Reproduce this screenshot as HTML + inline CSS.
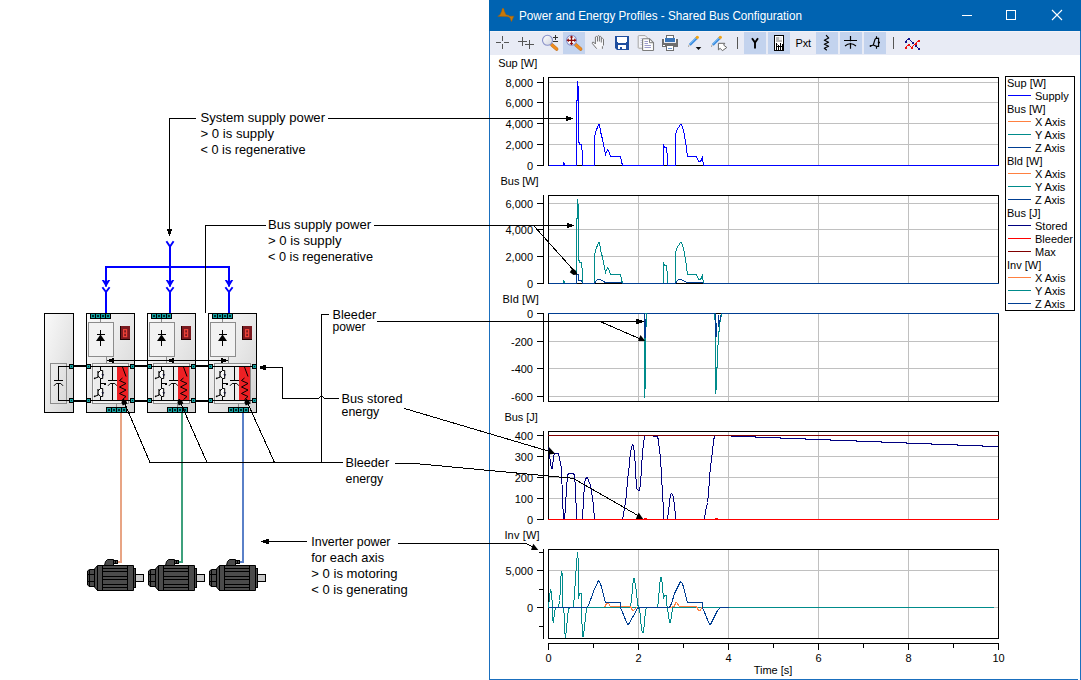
<!DOCTYPE html>
<html><head><meta charset="utf-8"><title>Power and Energy Profiles</title>
<style>
html,body{margin:0;padding:0;background:#fff;}
body{width:1081px;height:680px;overflow:hidden;position:relative;font-family:"Liberation Sans",sans-serif;}
svg{position:absolute;left:0;top:0;display:block;}
svg text{font-family:"Liberation Sans",sans-serif;}
</style></head><body>
<svg width="1081" height="680" viewBox="0 0 1081 680" shape-rendering="crispEdges">
<defs>
<linearGradient id="gmod" x1="0" y1="0" x2="1" y2="1"><stop offset="0" stop-color="#fafafa"/><stop offset="0.5" stop-color="#e8e8e8"/><stop offset="1" stop-color="#d2d2d2"/></linearGradient>
<linearGradient id="glens" x1="0" y1="0" x2="1" y2="1"><stop offset="0" stop-color="#ffffff"/><stop offset="1" stop-color="#d0d4e0"/></linearGradient>
</defs>
<rect x="489" y="0" width="592" height="680" fill="#ffffff" />
<rect x="489" y="0" width="592" height="31" fill="#0063B1" />
<rect x="489" y="31" width="1" height="649" fill="#1a6fbe"/>
<rect x="1080" y="31" width="1" height="649" fill="#1a6fbe"/>
<rect x="489" y="679" width="589" height="1" fill="#1a6fbe"/>
<rect x="490" y="31" width="590" height="24" fill="#e8ebf5" />
<rect x="490" y="31" width="590" height="1" fill="#f3f2f7"/>
<g shape-rendering="geometricPrecision">
<text x="519" y="20" font-size="12.4" text-anchor="start" fill="#fff" textLength="283" lengthAdjust="spacingAndGlyphs">Power and Energy Profiles - Shared Bus Configuration</text>
<path d="M961.5 15.5H971.5" stroke="#fff" stroke-width="1" fill="none" shape-rendering="crispEdges"/>
<rect x="1006.5" y="10.5" width="9" height="9" stroke="#fff" stroke-width="1" fill="none" shape-rendering="crispEdges"/>
<path d="M1052 10L1062 20M1062 10L1052 20" stroke="#fff" stroke-width="1.1" fill="none"/>
<path transform="translate(1,0)" d="M496.8 16.3 L498.5 15.2 L499.5 14 L500 12.5 L500.6 11.5 L501.2 9 L502 8 L502.8 9 L503.4 11.5 L504 12.5 L504.5 14 L505.5 15 L507.5 15.2 L508.5 16.2 L512.8 16.2 L512 18 L511.3 19.8 L510.5 21.6 L509.7 19.8 L509 18 L508 17 L506 16.6 L504 16.4 Z" fill="#c87808" stroke="#a86000" stroke-width="0.5"/>
</g>
<rect x="563" y="32" width="22" height="22" fill="#c3d3ee" />
<rect x="744" y="32" width="22" height="22" fill="#c3d3ee" />
<rect x="768" y="32" width="22" height="22" fill="#c3d3ee" />
<rect x="816" y="32" width="22" height="22" fill="#c3d3ee" />
<rect x="840" y="32" width="22" height="22" fill="#c3d3ee" />
<rect x="864" y="32" width="22" height="22" fill="#c3d3ee" />
<rect x="496" y="42" width="5" height="1" fill="#555555"/>
<rect x="504" y="42" width="5" height="1" fill="#555555"/>
<rect x="502" y="36" width="1" height="5" fill="#555555"/>
<rect x="502" y="44" width="1" height="5" fill="#555555"/>
<rect x="518" y="41" width="9" height="1" fill="#555555"/>
<rect x="522" y="37" width="1" height="9" fill="#555555"/>
<rect x="525" y="44" width="9" height="1" fill="#555555"/>
<rect x="529" y="40" width="1" height="9" fill="#555555"/>
<g shape-rendering="geometricPrecision">
<line x1="552" y1="45" x2="556.6" y2="49" stroke="#b8742c" stroke-width="3.6" stroke-linecap="round"/>
<line x1="552" y1="45" x2="556.6" y2="49" stroke="#f08c20" stroke-width="2.6" stroke-linecap="round"/>
<circle cx="547.5" cy="40.3" r="5" fill="url(#glens)" stroke="#8890c8" stroke-width="1.1"/>
<path d="M553 37.5H558M555.5 35V40M553 41.5H558" stroke="#333" stroke-width="1" fill="none" shape-rendering="crispEdges"/>
<line x1="576" y1="45" x2="580.6" y2="49" stroke="#b8742c" stroke-width="3.6" stroke-linecap="round"/>
<line x1="576" y1="45" x2="580.6" y2="49" stroke="#f08c20" stroke-width="2.6" stroke-linecap="round"/>
<circle cx="571.5" cy="40.3" r="5" fill="#fafcff" stroke="#8890c8" stroke-width="1.1"/>
<path d="M567.5 40.3H575.5M571.5 36.3V44.3" stroke="#8b0c0c" stroke-width="1.3" fill="none"/>
<path d="M566.6 40.3l2.2-2v4zM576.4 40.3l-2.2-2v4zM571.5 35.4l-2 2.2h4zM571.5 45.2l-2-2.2h4z" fill="#8b0c0c"/>
<path d="M592.3 42.3 L594.2 42.3 L595.4 43.8 L595.4 37 Q596.4 35.6 597.5 36.8 L597.6 36 Q598.5 34.6 599.4 36 L599.5 36.6 Q600.4 35.6 601.3 36.8 L601.4 38.5 Q602.6 37.6 603.5 39 L603.5 45.5 L602.4 46.5 L602.4 48.8 L596.8 48.8 L592.3 43.5 Z" fill="#f6f6fa" stroke="none"/>
<path d="M596.7 48.7 L592.4 43.6 L592.4 42.3 L594 42.3 L595.4 44 L595.4 37 Q596.4 35.8 597.5 37 V41.5 M597.5 36.6 Q598.4 34.6 599.4 36.2 V41.5 M599.5 37 Q600.4 35.8 601.3 37 V42.5 M601.4 39 Q602.6 37.6 603.5 39.2 V45.5 M602.4 46.3 V48.8" fill="none" stroke="#6e6e6e" stroke-width="0.95"/>
</g>
<rect x="615" y="36" width="14" height="14" fill="#1f4e9f" />
<rect x="617" y="37" width="10" height="5" fill="#ffffff" />
<rect x="618" y="42" width="8" height="1" fill="#ffffff" />
<rect x="618" y="45" width="8" height="4" fill="#ffffff" />
<rect x="620" y="47" width="2" height="2" fill="#1f4e9f" />
<path d="M615 48v2h2z" fill="#e8ebf5" shape-rendering="geometricPrecision"/>
<g shape-rendering="geometricPrecision">
<path d="M639.2 35.6h6l3 3v9.6h-9.3q-0.7 0-0.7-0.7v-11.2q0-0.7 1-0.7z" fill="#f4f4f8" stroke="#a4a4a4" stroke-width="1"/>
<path d="M640.5 38.5h2M640.5 40.5h2M640.5 42.5h2M640.5 44.5h2" stroke="#c0c4e0" stroke-width="0.9"/>
<path d="M643.2 38.7h6.3l4 4v7.2q0 0.6-0.6 0.6h-9.7q-0.6 0-0.6-0.6v-10.6q0-0.6 0.6-0.6z" fill="#fdfdfd" stroke="#7c7c7c" stroke-width="1.1"/>
<path d="M649.5 38.7v4h4" fill="none" stroke="#7c7c7c" stroke-width="1"/>
<path d="M644.5 41.5h3.5M644.5 43.5h3.5M644.5 45.5h6.5M644.5 47.5h6.5" stroke="#9c9ccc" stroke-width="1" fill="none"/>
</g>
<rect x="662" y="39" width="16" height="8" fill="#6e6e6e" />
<rect x="664" y="38" width="12" height="5" fill="#e8ebf5" />
<rect x="666.5" y="35.5" width="7" height="4" fill="#fff" stroke="#6e6e6e" stroke-width="1"/>
<rect x="664" y="38" width="12" height="4" fill="#ffffff" />
<rect x="665" y="38" width="10" height="3.5" fill="#3874b8" />
<rect x="663" y="45" width="2" height="1" fill="#ffffff"/>
<rect x="666.5" y="45.5" width="7" height="5" fill="#fff" stroke="#6e6e6e" stroke-width="1"/>
<rect x="668" y="48" width="4" height="1" fill="#6a98d0"/>
<g shape-rendering="geometricPrecision">
<g transform="translate(0,0)">
<path d="M688 46.6 L688.9 44 L690.7 45.8 Z" fill="#d8d0c8"/>
<path d="M688 46.6 L688.4 45.5 L689.2 46.2 Z" fill="#444"/>
<path d="M688.9 44 L695.7 37.2 L697.5 39 L690.7 45.8 Z" fill="#3c8ce0"/>
<path d="M689.6 44.2 L696.2 37.7" stroke="#7cc0f4" stroke-width="1"/>
<path d="M695.4 37.5 L697.2 39.3" stroke="#9a9a9a" stroke-width="0.8"/>
<circle cx="697.3" cy="37.3" r="1.6" fill="#f0a418"/>
</g>
<g transform="translate(23,0)">
<path d="M688 46.6 L688.9 44 L690.7 45.8 Z" fill="#d8d0c8"/>
<path d="M688 46.6 L688.4 45.5 L689.2 46.2 Z" fill="#444"/>
<path d="M688.9 44 L695.7 37.2 L697.5 39 L690.7 45.8 Z" fill="#3c8ce0"/>
<path d="M689.6 44.2 L696.2 37.7" stroke="#7cc0f4" stroke-width="1"/>
<path d="M695.4 37.5 L697.2 39.3" stroke="#9a9a9a" stroke-width="0.8"/>
<circle cx="697.3" cy="37.3" r="1.6" fill="#f0a418"/>
</g>
<path d="M695.7 47h5.6l-2.8 3z" fill="#111"/>
<path d="M718.4 43.3h6.4l-1.2 1.8 3.2 2.4-4.4 3.2-2.2-2.4-1.8 1.6z" fill="#fff" stroke="#666" stroke-width="1"/>
</g>
<rect x="737" y="37" width="1" height="12" fill="#555555"/>
<rect x="893" y="37" width="1" height="12" fill="#555555"/>
<g shape-rendering="geometricPrecision">
<path d="M752 38.3 L755 42.6 L758 38.3 M755 42.3V48.5" stroke="#000" stroke-width="1.9" fill="none"/>
</g>
<rect x="774.5" y="35.5" width="9" height="15" fill="#fff" stroke="#000" stroke-width="1"/>
<rect x="776" y="37" width="6" height="5" fill="#b8b8b8" />
<rect x="779" y="37" width="3" height="3" fill="#e8e8e8" />
<rect x="776" y="43" width="1" height="7" fill="#000"/>
<rect x="778" y="45" width="1" height="5" fill="#000"/>
<rect x="780" y="43" width="1" height="7" fill="#000"/>
<rect x="782" y="44" width="1" height="6" fill="#000"/>
<rect x="776" y="46" width="7" height="1" fill="#000"/>
<rect x="777" y="44" width="1" height="1" fill="#888"/>
<rect x="779" y="48" width="1" height="1" fill="#fff"/>
<g shape-rendering="geometricPrecision">
<text x="795.5" y="47" font-size="11" text-anchor="start" fill="#000" textLength="15.5" lengthAdjust="spacing">Pxt</text>
<path d="M826 35.2 L828.7 38 L824.3 40.2 L828.6 42.2 L824.3 44.3 L828.6 46.3 L824.3 48.3 L826.8 50.3" stroke="#000" stroke-width="1.1" fill="none" stroke-linejoin="round"/>
<path d="M850.5 36V48.7M844 40.5H857" stroke="#000" stroke-width="1.2" fill="none"/><path d="M845 46Q850.5 41.5 856 46" stroke="#000" stroke-width="1.1" fill="none"/>
<rect x="849" y="41.3" width="3" height="1.6" fill="#c3d3ee" />
<path d="M870.2 46 L873.3 45 L875 39.4 L876.5 37.8 V36.2 M876.5 38.3 H878.6 V46.3 H876.5 L873.3 45 M876.5 46.3 V48.8" stroke="#000" stroke-width="1.15" fill="none"/>
<path d="M877.8 42.5h2.2" stroke="#000" stroke-width="1.6"/><circle cx="870.5" cy="46" r="0.9" fill="#000"/>
<path d="M905.5 41.5 L908.5 38.5 L912.5 42.5 L915.5 45.5 L918.5 48.5" stroke="#101088" stroke-width="1" fill="none"/>
<path d="M905.5 47.5 L908.5 44.5 L911.5 47.5 L915.5 43.5 L918.5 40.5" stroke="#ee1010" stroke-width="1" fill="none"/>
</g>
<rect x="904.5" y="40.5" width="2" height="2" fill="#101088" />
<rect x="907.5" y="37.5" width="2" height="2" fill="#101088" />
<rect x="911.5" y="41.5" width="2" height="2" fill="#101088" />
<rect x="914.5" y="44.5" width="2" height="2" fill="#101088" />
<rect x="917.5" y="47.5" width="2" height="2" fill="#101088" />
<rect x="904.5" y="46.5" width="2" height="2" fill="#ee1010" />
<rect x="907.5" y="43.5" width="2" height="2" fill="#ee1010" />
<rect x="910.5" y="46.5" width="2" height="2" fill="#ee1010" />
<rect x="914.5" y="42.5" width="2" height="2" fill="#ee1010" />
<rect x="917.5" y="39.5" width="2" height="2" fill="#ee1010" />
<g id="charts">
<rect x="548" y="77" width="451" height="89" fill="#ffffff" />
<rect x="549" y="82" width="449" height="1" fill="#c0c0c0"/>
<rect x="549" y="102" width="449" height="1" fill="#c0c0c0"/>
<rect x="549" y="123" width="449" height="1" fill="#c0c0c0"/>
<rect x="549" y="144" width="449" height="1" fill="#c0c0c0"/>
<rect x="638" y="78" width="1" height="87" fill="#c0c0c0"/>
<rect x="728" y="78" width="1" height="87" fill="#c0c0c0"/>
<rect x="818" y="78" width="1" height="87" fill="#c0c0c0"/>
<rect x="908" y="78" width="1" height="87" fill="#c0c0c0"/>
<rect x="548" y="77" width="451" height="1" fill="#000"/>
<rect x="548" y="165" width="451" height="1" fill="#000"/>
<rect x="548" y="77" width="1" height="89" fill="#000"/>
<rect x="998" y="77" width="1" height="89" fill="#000"/>
<rect x="543" y="77" width="1" height="89" fill="#000"/>
<rect x="537" y="82" width="7" height="1" fill="#000"/>
<rect x="537" y="102" width="7" height="1" fill="#000"/>
<rect x="537" y="123" width="7" height="1" fill="#000"/>
<rect x="537" y="144" width="7" height="1" fill="#000"/>
<rect x="537" y="165" width="7" height="1" fill="#000"/>
<g shape-rendering="geometricPrecision">
<text x="533" y="86.5" font-size="11" text-anchor="end" fill="#000" >8,000</text>
<text x="533" y="106.5" font-size="11" text-anchor="end" fill="#000" >6,000</text>
<text x="533" y="127.5" font-size="11" text-anchor="end" fill="#000" >4,000</text>
<text x="533" y="148.5" font-size="11" text-anchor="end" fill="#000" >2,000</text>
<text x="533" y="169.5" font-size="11" text-anchor="end" fill="#000" >0</text>
<text x="498.2" y="67" font-size="11" text-anchor="start" fill="#000" textLength="39.0" lengthAdjust="spacing">Sup [W]</text>
</g>
<rect x="548" y="195" width="451" height="89" fill="#ffffff" />
<rect x="549" y="203" width="449" height="1" fill="#c0c0c0"/>
<rect x="549" y="229" width="449" height="1" fill="#c0c0c0"/>
<rect x="549" y="256" width="449" height="1" fill="#c0c0c0"/>
<rect x="638" y="196" width="1" height="87" fill="#c0c0c0"/>
<rect x="728" y="196" width="1" height="87" fill="#c0c0c0"/>
<rect x="818" y="196" width="1" height="87" fill="#c0c0c0"/>
<rect x="908" y="196" width="1" height="87" fill="#c0c0c0"/>
<rect x="548" y="195" width="451" height="1" fill="#000"/>
<rect x="548" y="283" width="451" height="1" fill="#000"/>
<rect x="548" y="195" width="1" height="89" fill="#000"/>
<rect x="998" y="195" width="1" height="89" fill="#000"/>
<rect x="543" y="195" width="1" height="89" fill="#000"/>
<rect x="537" y="203" width="7" height="1" fill="#000"/>
<rect x="537" y="229" width="7" height="1" fill="#000"/>
<rect x="537" y="256" width="7" height="1" fill="#000"/>
<rect x="537" y="283" width="7" height="1" fill="#000"/>
<g shape-rendering="geometricPrecision">
<text x="533" y="207.5" font-size="11" text-anchor="end" fill="#000" >6,000</text>
<text x="533" y="233.5" font-size="11" text-anchor="end" fill="#000" >4,000</text>
<text x="533" y="260.5" font-size="11" text-anchor="end" fill="#000" >2,000</text>
<text x="533" y="287.5" font-size="11" text-anchor="end" fill="#000" >0</text>
<text x="500.6" y="185" font-size="11" text-anchor="start" fill="#000" textLength="38.0" lengthAdjust="spacing">Bus [W]</text>
</g>
<rect x="548" y="313" width="451" height="89" fill="#ffffff" />
<rect x="549" y="341" width="449" height="1" fill="#c0c0c0"/>
<rect x="549" y="368" width="449" height="1" fill="#c0c0c0"/>
<rect x="549" y="396" width="449" height="1" fill="#c0c0c0"/>
<rect x="638" y="314" width="1" height="87" fill="#c0c0c0"/>
<rect x="728" y="314" width="1" height="87" fill="#c0c0c0"/>
<rect x="818" y="314" width="1" height="87" fill="#c0c0c0"/>
<rect x="908" y="314" width="1" height="87" fill="#c0c0c0"/>
<rect x="548" y="313" width="451" height="1" fill="#000"/>
<rect x="548" y="401" width="451" height="1" fill="#000"/>
<rect x="548" y="313" width="1" height="89" fill="#000"/>
<rect x="998" y="313" width="1" height="89" fill="#000"/>
<rect x="543" y="313" width="1" height="89" fill="#000"/>
<rect x="537" y="313" width="7" height="1" fill="#000"/>
<rect x="537" y="341" width="7" height="1" fill="#000"/>
<rect x="537" y="368" width="7" height="1" fill="#000"/>
<rect x="537" y="396" width="7" height="1" fill="#000"/>
<g shape-rendering="geometricPrecision">
<text x="533" y="317.5" font-size="11" text-anchor="end" fill="#000" >0</text>
<text x="533" y="345.5" font-size="11" text-anchor="end" fill="#000" >-200</text>
<text x="533" y="372.5" font-size="11" text-anchor="end" fill="#000" >-400</text>
<text x="533" y="400.5" font-size="11" text-anchor="end" fill="#000" >-600</text>
<text x="502.6" y="303" font-size="11" text-anchor="start" fill="#000" textLength="36.2" lengthAdjust="spacing">Bld [W]</text>
</g>
<rect x="548" y="431" width="451" height="89" fill="#ffffff" />
<rect x="549" y="456" width="449" height="1" fill="#c0c0c0"/>
<rect x="549" y="477" width="449" height="1" fill="#c0c0c0"/>
<rect x="549" y="498" width="449" height="1" fill="#c0c0c0"/>
<rect x="638" y="432" width="1" height="87" fill="#c0c0c0"/>
<rect x="728" y="432" width="1" height="87" fill="#c0c0c0"/>
<rect x="818" y="432" width="1" height="87" fill="#c0c0c0"/>
<rect x="908" y="432" width="1" height="87" fill="#c0c0c0"/>
<rect x="548" y="431" width="451" height="1" fill="#000"/>
<rect x="548" y="519" width="451" height="1" fill="#000"/>
<rect x="548" y="431" width="1" height="89" fill="#000"/>
<rect x="998" y="431" width="1" height="89" fill="#000"/>
<rect x="543" y="431" width="1" height="89" fill="#000"/>
<rect x="537" y="435" width="7" height="1" fill="#000"/>
<rect x="537" y="456" width="7" height="1" fill="#000"/>
<rect x="537" y="477" width="7" height="1" fill="#000"/>
<rect x="537" y="498" width="7" height="1" fill="#000"/>
<rect x="537" y="519" width="7" height="1" fill="#000"/>
<g shape-rendering="geometricPrecision">
<text x="533" y="439.5" font-size="11" text-anchor="end" fill="#000" >400</text>
<text x="533" y="460.5" font-size="11" text-anchor="end" fill="#000" >300</text>
<text x="533" y="481.5" font-size="11" text-anchor="end" fill="#000" >200</text>
<text x="533" y="502.5" font-size="11" text-anchor="end" fill="#000" >100</text>
<text x="533" y="523.5" font-size="11" text-anchor="end" fill="#000" >0</text>
<text x="504.4" y="421" font-size="11" text-anchor="start" fill="#000" textLength="33.4" lengthAdjust="spacing">Bus [J]</text>
</g>
<rect x="548" y="549" width="451" height="90" fill="#ffffff" />
<rect x="549" y="570" width="449" height="1" fill="#c0c0c0"/>
<rect x="549" y="607" width="449" height="1" fill="#c0c0c0"/>
<rect x="638" y="550" width="1" height="88" fill="#c0c0c0"/>
<rect x="728" y="550" width="1" height="88" fill="#c0c0c0"/>
<rect x="818" y="550" width="1" height="88" fill="#c0c0c0"/>
<rect x="908" y="550" width="1" height="88" fill="#c0c0c0"/>
<rect x="548" y="549" width="451" height="1" fill="#000"/>
<rect x="548" y="638" width="451" height="1" fill="#000"/>
<rect x="548" y="549" width="1" height="90" fill="#000"/>
<rect x="998" y="549" width="1" height="90" fill="#000"/>
<rect x="543" y="549" width="1" height="90" fill="#000"/>
<rect x="539" y="552" width="5" height="1" fill="#000"/>
<rect x="537" y="570" width="7" height="1" fill="#000"/>
<rect x="539" y="589" width="5" height="1" fill="#000"/>
<rect x="537" y="607" width="7" height="1" fill="#000"/>
<rect x="539" y="626" width="5" height="1" fill="#000"/>
<g shape-rendering="geometricPrecision">
<text x="533" y="574.5" font-size="11" text-anchor="end" fill="#000" >5,000</text>
<text x="533" y="611.5" font-size="11" text-anchor="end" fill="#000" >0</text>
<text x="504.4" y="539" font-size="11" text-anchor="start" fill="#000" textLength="35.2" lengthAdjust="spacing">Inv [W]</text>
</g>
<rect x="548" y="643" width="451" height="1" fill="#000"/>
<rect x="548" y="643" width="1" height="7" fill="#000"/>
<rect x="593" y="643" width="1" height="5" fill="#000"/>
<rect x="638" y="643" width="1" height="7" fill="#000"/>
<rect x="683" y="643" width="1" height="5" fill="#000"/>
<rect x="728" y="643" width="1" height="7" fill="#000"/>
<rect x="773" y="643" width="1" height="5" fill="#000"/>
<rect x="818" y="643" width="1" height="7" fill="#000"/>
<rect x="863" y="643" width="1" height="5" fill="#000"/>
<rect x="908" y="643" width="1" height="7" fill="#000"/>
<rect x="953" y="643" width="1" height="5" fill="#000"/>
<rect x="998" y="643" width="1" height="7" fill="#000"/>
<g shape-rendering="geometricPrecision">
<text x="548.5" y="662" font-size="11" text-anchor="middle" fill="#000" >0</text>
<text x="638.5" y="662" font-size="11" text-anchor="middle" fill="#000" >2</text>
<text x="728.5" y="662" font-size="11" text-anchor="middle" fill="#000" >4</text>
<text x="818.5" y="662" font-size="11" text-anchor="middle" fill="#000" >6</text>
<text x="908.5" y="662" font-size="11" text-anchor="middle" fill="#000" >8</text>
<text x="998.5" y="662" font-size="11" text-anchor="middle" fill="#000" >10</text>
<text x="773" y="674" font-size="11" text-anchor="middle" fill="#000" >Time [s]</text>
</g>
<polyline points="548.5,165.5 563.5,165.5 563.5,162.5 564.5,164.5 564.5,165.5 576.5,165.5 576.5,100.5 577.5,100.5 577.5,81.5 578.5,90.5 578.5,140.5 579.5,144.5 581.5,144.5 582.5,155.5 582.5,165.5 594.5,165.5 594.5,137.5 595.5,132.5 598.5,124.5 599.5,124.5 600.5,131.5 602.5,139.5 604.5,149.5 605.5,154.5 607.5,149.5 608.5,150.5 610.5,156.5 620.5,156.5 621.5,161.5 622.5,165.5 663.5,165.5 663.5,144.5 664.5,147.5 666.5,147.5 667.5,158.5 667.5,165.5 675.5,165.5 675.5,135.5 676.5,130.5 680.5,124.5 681.5,124.5 683.5,130.5 685.5,141.5 687.5,156.5 696.5,156.5 698.5,161.5 700.5,161.5 702.5,157.5 703.5,165.5 998.5,165.5" fill="none" stroke="#0000ff" stroke-width="1" />
<polyline points="548.5,283.5 563.5,283.5 563.5,280.5 564.5,282.5 564.5,283.5 576.5,283.5 576.5,218.5 577.5,218.5 577.5,199.5 578.5,208.5 578.5,258.5 579.5,262.5 581.5,262.5 582.5,273.5 582.5,283.5 594.5,283.5 594.5,255.5 595.5,250.5 598.5,242.5 599.5,242.5 600.5,249.5 602.5,257.5 604.5,267.5 605.5,272.5 607.5,267.5 608.5,268.5 610.5,274.5 620.5,274.5 621.5,279.5 622.5,283.5 663.5,283.5 663.5,262.5 664.5,265.5 666.5,265.5 667.5,276.5 667.5,283.5 675.5,283.5 675.5,253.5 676.5,248.5 680.5,242.5 681.5,242.5 683.5,248.5 685.5,259.5 687.5,274.5 696.5,274.5 698.5,279.5 700.5,279.5 702.5,275.5 703.5,283.5 998.5,283.5" fill="none" stroke="#008b8b" stroke-width="1" />
<polyline points="548.5,283.5 576.5,283.5 576.5,274.5 578.5,274.5 578.5,280.5 581.5,280.5 582.5,283.5 594.5,283.5 595.5,281.5 597.5,279.5 600.5,279.5 603.5,281.5 605.5,282.5 621.5,282.5 622.5,283.5 675.5,283.5 676.5,281.5 678.5,279.5 681.5,279.5 684.5,281.5 687.5,282.5 702.5,282.5 703.5,283.5 998.5,283.5" fill="none" stroke="#003e92" stroke-width="1" />
<rect x="548" y="313" width="451" height="1" fill="#003e92"/>
<rect x="644" y="313" width="1" height="85" fill="#008b8b"/>
<rect x="645" y="313" width="1" height="76" fill="#008b8b"/>
<rect x="646" y="313" width="1" height="14" fill="#008b8b"/>
<rect x="644" y="313" width="1" height="25" fill="#003e92"/>
<rect x="645" y="319" width="1" height="19" fill="#003e92"/>
<rect x="645" y="314" width="1" height="5" fill="#ffffff"/>
<polyline points="714.5,313.5 714.5,318.5 715.5,320.5 715.5,393.5 716.5,386.5 716.5,367.5 717.5,367.5 717.5,345.5 718.5,344.5 718.5,331.5 719.5,331.5 719.5,321.5 720.5,321.5 720.5,316.5 721.5,316.5 721.5,313.5" fill="none" stroke="#008b8b" stroke-width="1" />
<polyline points="715.5,313.5 715.5,336.5 716.5,336.5 716.5,322.5" fill="none" stroke="#003e92" stroke-width="1" />
<polyline points="718.5,314.5 718.5,326.5 719.5,321.5 720.5,318.5 720.5,314.5" fill="none" stroke="#003e92" stroke-width="1" />
<rect x="716" y="313" width="5" height="1" fill="#000"/>
<rect x="548" y="435" width="451" height="1" fill="#800000"/>
<polyline points="548.5,447.5 549.5,454.5 550.5,463.5 551.5,468.5 552.5,468.5 553.5,456.5 554.5,453.5 558.5,453.5 559.5,458.5 561.5,468.5 562.5,499.5 563.5,518.5 564.5,519.5 565.5,506.5 566.5,488.5 567.5,475.5 568.5,473.5 573.5,473.5 574.5,475.5 575.5,487.5 576.5,518.5 576.5,519.5 582.5,519.5 583.5,499.5 584.5,484.5 585.5,478.5 587.5,477.5 588.5,480.5 590.5,485.5 592.5,497.5 593.5,506.5 594.5,518.5 595.5,519.5 622.5,519.5 624.5,508.5 626.5,494.5 627.5,480.5 629.5,463.5 630.5,451.5 632.5,444.5 633.5,445.5 634.5,453.5 635.5,468.5 636.5,488.5 638.5,490.5 639.5,490.5 640.5,483.5 641.5,468.5 642.5,451.5 644.5,436.5" fill="none" stroke="#000080" stroke-width="1" />
<polyline points="652.5,436.5 657.5,436.5 658.5,440.5 659.5,450.5 660.5,457.5 661.5,475.5 662.5,494.5 663.5,508.5 663.5,519.5 667.5,519.5 668.5,511.5 669.5,502.5 670.5,494.5 671.5,493.5 672.5,494.5 673.5,497.5 674.5,505.5 675.5,516.5 675.5,519.5 703.5,519.5 704.5,518.5 705.5,511.5 707.5,502.5 708.5,494.5 709.5,477.5 710.5,466.5 712.5,451.5 713.5,440.5 714.5,436.5" fill="none" stroke="#000080" stroke-width="1" />
<polyline points="730.5,436.5 755.5,436.5 755.5,437.5 780.5,437.5 780.5,438.5 805.5,438.5 805.5,439.5 830.5,439.5 830.5,440.5 856.5,440.5 856.5,441.5 881.5,441.5 881.5,442.5 906.5,442.5 906.5,443.5 931.5,443.5 931.5,444.5 957.5,444.5 957.5,445.5 982.5,445.5 982.5,446.5 997.5,446.5" fill="none" stroke="#000080" stroke-width="1" />
<rect x="548" y="519" width="451" height="1" fill="#ff0000"/>
<rect x="644" y="518" width="3" height="1" fill="#ff0000"/>
<rect x="715" y="518" width="3" height="1" fill="#ff0000"/>
<rect x="548" y="607" width="446" height="1" fill="#008b8b"/>
<polyline points="548.5,607.5 549.5,596.5 550.5,589.5 551.5,592.5 552.5,606.5 552.5,619.5 553.5,621.5 554.5,612.5 555.5,607.5 558.5,607.5 559.5,600.5 560.5,590.5 560.5,581.5 561.5,571.5 562.5,574.5 562.5,603.5 563.5,612.5 564.5,613.5 564.5,629.5 565.5,637.5 566.5,629.5 567.5,617.5 568.5,609.5 569.5,607.5 573.5,607.5 574.5,593.5 575.5,578.5 576.5,564.5 577.5,552.5 578.5,562.5 578.5,598.5 579.5,593.5 581.5,593.5 581.5,610.5 582.5,636.5 583.5,636.5 584.5,626.5 585.5,617.5 586.5,609.5 586.5,607.5" fill="none" stroke="#008b8b" stroke-width="1" />
<polyline points="630.5,607.5 631.5,599.5 632.5,588.5 633.5,578.5 634.5,578.5 635.5,586.5 636.5,591.5 637.5,603.5 638.5,607.5 639.5,607.5 640.5,617.5 641.5,629.5 642.5,632.5 643.5,632.5 644.5,621.5 645.5,610.5 646.5,607.5" fill="none" stroke="#008b8b" stroke-width="1" />
<polyline points="657.5,607.5 658.5,600.5 659.5,586.5 660.5,577.5 661.5,577.5 662.5,586.5 663.5,598.5 664.5,595.5 666.5,595.5 666.5,603.5 667.5,607.5 668.5,615.5 669.5,622.5 670.5,622.5 671.5,615.5 672.5,608.5 673.5,607.5" fill="none" stroke="#008b8b" stroke-width="1" />
<polyline points="604.5,607.5 606.5,603.5 608.5,603.5 610.5,606.5 630.5,606.5 632.5,610.5 633.5,610.5 636.5,607.5" fill="none" stroke="#ff8040" stroke-width="1" />
<polyline points="669.5,607.5 674.5,606.5 675.5,602.5 676.5,602.5 679.5,606.5 696.5,606.5 698.5,610.5 700.5,610.5 701.5,607.5" fill="none" stroke="#ff8040" stroke-width="1" />
<polyline points="548.5,607.5 586.5,607.5 588.5,605.5 593.5,591.5 598.5,580.5 600.5,583.5 605.5,602.5 620.5,602.5 620.5,607.5 627.5,624.5 628.5,624.5 637.5,608.5 639.5,607.5 669.5,607.5 671.5,603.5 674.5,593.5 680.5,581.5 682.5,583.5 687.5,602.5 702.5,602.5 702.5,607.5 709.5,624.5 710.5,624.5 717.5,610.5 720.5,607.5 728.5,607.5" fill="none" stroke="#003e92" stroke-width="1" />
</g>
<rect x="1005.5" y="76.5" width="69" height="234" fill="#ffffff" stroke="#000" stroke-width="1" />
<clipPath id="legclip"><rect x="1006" y="77" width="68" height="233"/></clipPath>
<g shape-rendering="geometricPrecision" clip-path="url(#legclip)">
<text x="1007" y="87" font-size="11" text-anchor="start" fill="#000" >Sup [W]</text>
<text x="1035" y="100" font-size="11" text-anchor="start" fill="#000" >Supply</text>
<text x="1007" y="113" font-size="11" text-anchor="start" fill="#000" >Bus [W]</text>
<text x="1035" y="126" font-size="11" text-anchor="start" fill="#000" >X Axis</text>
<text x="1035" y="139" font-size="11" text-anchor="start" fill="#000" >Y Axis</text>
<text x="1035" y="152" font-size="11" text-anchor="start" fill="#000" >Z Axis</text>
<text x="1007" y="165" font-size="11" text-anchor="start" fill="#000" >Bld [W]</text>
<text x="1035" y="178" font-size="11" text-anchor="start" fill="#000" >X Axis</text>
<text x="1035" y="191" font-size="11" text-anchor="start" fill="#000" >Y Axis</text>
<text x="1035" y="204" font-size="11" text-anchor="start" fill="#000" >Z Axis</text>
<text x="1007" y="217" font-size="11" text-anchor="start" fill="#000" >Bus [J]</text>
<text x="1035" y="230" font-size="11" text-anchor="start" fill="#000" >Stored</text>
<text x="1035" y="243" font-size="11" text-anchor="start" fill="#000" >Bleeder</text>
<text x="1035" y="256" font-size="11" text-anchor="start" fill="#000" >Max</text>
<text x="1007" y="269" font-size="11" text-anchor="start" fill="#000" >Inv [W]</text>
<text x="1035" y="282" font-size="11" text-anchor="start" fill="#000" >X Axis</text>
<text x="1035" y="295" font-size="11" text-anchor="start" fill="#000" >Y Axis</text>
<text x="1035" y="308" font-size="11" text-anchor="start" fill="#000" >Z Axis</text>
</g>
<rect x="1008" y="95" width="23" height="1" fill="#0000ff"/>
<rect x="1008" y="121" width="23" height="1" fill="#ff8040"/>
<rect x="1008" y="134" width="23" height="1" fill="#008b8b"/>
<rect x="1008" y="147" width="23" height="1" fill="#003e92"/>
<rect x="1008" y="173" width="23" height="1" fill="#ff8040"/>
<rect x="1008" y="186" width="23" height="1" fill="#008b8b"/>
<rect x="1008" y="199" width="23" height="1" fill="#003e92"/>
<rect x="1008" y="225" width="23" height="1" fill="#000080"/>
<rect x="1008" y="238" width="23" height="1" fill="#ff0000"/>
<rect x="1008" y="251" width="23" height="1" fill="#800000"/>
<rect x="1008" y="277" width="23" height="1" fill="#ff8040"/>
<rect x="1008" y="290" width="23" height="1" fill="#008b8b"/>
<rect x="1008" y="303" width="23" height="1" fill="#003e92"/>
<rect x="120" y="412" width="2" height="151" fill="#e8a484" />
<rect x="118" y="561" width="4" height="2" fill="#e8a484" />
<rect x="181" y="412" width="2" height="151" fill="#3ea07c" />
<rect x="179" y="561" width="4" height="2" fill="#3ea07c" />
<rect x="242" y="412" width="2" height="151" fill="#5a80c8" />
<rect x="240" y="561" width="4" height="2" fill="#5a80c8" />
<rect x="44.5" y="313.5" width="29" height="99" fill="url(#gmod)" stroke="#000" stroke-width="1" />
<rect x="50.5" y="363.5" width="16" height="40" fill="none" stroke="#8c8c8c" stroke-width="1" />
<rect x="58" y="366" width="14" height="1" fill="#000"/>
<rect x="58" y="400" width="14" height="1" fill="#000"/>
<rect x="58" y="366" width="1" height="15" fill="#000"/>
<rect x="54" y="380" width="9" height="1" fill="#000"/>
<path d="M54 385.8 L56.2 383.5 H60.8 L63 385.8" stroke="#000" stroke-width="1" fill="none" shape-rendering="geometricPrecision"/>
<rect x="58" y="383" width="1" height="18" fill="#000"/>
<rect x="69" y="364" width="5" height="5" fill="#000000" />
<rect x="70" y="365" width="3" height="3" fill="#12a0a0" />
<rect x="71" y="366" width="1" height="1" fill="#003838" />
<rect x="69" y="398" width="5" height="5" fill="#000000" />
<rect x="70" y="399" width="3" height="3" fill="#12a0a0" />
<rect x="71" y="400" width="1" height="1" fill="#003838" />
<rect x="73" y="365" width="15" height="2" fill="#000" />
<rect x="73" y="400" width="15" height="2" fill="#000" />
<rect x="134" y="365" width="15" height="2" fill="#000" />
<rect x="134" y="400" width="15" height="2" fill="#000" />
<rect x="195" y="365" width="15" height="2" fill="#000" />
<rect x="195" y="400" width="15" height="2" fill="#000" />
<g transform="translate(0,0)">
<rect x="86.5" y="313.5" width="48" height="99" fill="url(#gmod)" stroke="#000" stroke-width="1" />
<rect x="90" y="314" width="21" height="5" fill="#000000" />
<rect x="91" y="314" width="4" height="4" fill="#12a0a0" />
<rect x="92" y="315" width="2" height="2" fill="#002c2c" />
<rect x="96" y="314" width="4" height="4" fill="#12a0a0" />
<rect x="97" y="315" width="2" height="2" fill="#002c2c" />
<rect x="101" y="314" width="4" height="4" fill="#12a0a0" />
<rect x="102" y="315" width="2" height="2" fill="#002c2c" />
<rect x="106" y="314" width="4" height="4" fill="#12a0a0" />
<rect x="107" y="315" width="2" height="2" fill="#002c2c" />
<rect x="100" y="319" width="1" height="4" fill="#8c8c8c"/>
<rect x="88.5" y="322.5" width="25" height="34" fill="#f2f2f2" stroke="#8c8c8c" stroke-width="1" />
<rect x="100" y="330" width="1" height="16" fill="#000"/>
<rect x="97" y="334" width="8" height="1" fill="#000"/>
<path d="M100.5 334.5 L96 341 L105 341 Z" fill="#000" shape-rendering="geometricPrecision"/>
<rect x="120" y="326" width="10" height="14" fill="#7a1a20" />
<rect x="120" y="326" width="1" height="14" fill="#200000"/>
<rect x="120" y="339" width="10" height="1" fill="#200000"/>
<path d="M123.6 329.5h3v3.6h-3zM123.6 333.1h3v3.6h-3z" fill="none" stroke="#ee4238" stroke-width="1.25" shape-rendering="geometricPrecision"/>
<rect x="92.5" y="363.5" width="36" height="40" fill="#ececec" stroke="#8c8c8c" stroke-width="1" />
<rect x="93.5" y="364.5" width="34" height="38" fill="none" stroke="#f4f4f4" stroke-width="1" />
<rect x="88" y="366" width="45" height="1" fill="#000"/>
<rect x="88" y="400" width="45" height="1" fill="#000"/>
<rect x="100" y="366" width="1" height="5" fill="#000"/>
<rect x="100" y="378" width="1" height="11" fill="#000"/>
<rect x="100" y="396" width="1" height="5" fill="#000"/>
<g shape-rendering="geometricPrecision"><path d="M98.6 371L100.6 370.4H102.2V378.4H100.6L98.6 377.6Z" fill="#fbfbfb"/><path d="M100.5 370.5H102.7V378.5H100.5" stroke="#000" stroke-width="1" fill="none"/><path d="M98 371V377.6" stroke="#000" stroke-width="1.2" fill="none"/><path d="M98 373L100.5 370.5M98 375.8L100.5 378.5M94.4 378.4L98 377.2" stroke="#000" stroke-width="1" fill="none"/><circle cx="94.6" cy="378.4" r="0.8" fill="#000"/><path d="M101.4 374.2h2.8l-1.4 2.2z" fill="#101030"/></g>
<g shape-rendering="geometricPrecision"><path d="M98.6 389L100.6 388.4H102.2V396.4H100.6L98.6 395.6Z" fill="#fbfbfb"/><path d="M100.5 388.5H102.7V396.5H100.5" stroke="#000" stroke-width="1" fill="none"/><path d="M98 389V395.6" stroke="#000" stroke-width="1.2" fill="none"/><path d="M98 391L100.5 388.5M98 393.8L100.5 396.5M94.4 396.4L98 395.2" stroke="#000" stroke-width="1" fill="none"/><circle cx="94.6" cy="396.4" r="0.8" fill="#000"/><path d="M101.4 392.2h2.8l-1.4 2.2z" fill="#101030"/></g>
<rect x="100" y="383" width="6" height="1" fill="#000"/>
<rect x="104" y="384" width="2" height="1" fill="#000"/>
<rect x="112" y="366" width="1" height="15" fill="#000"/>
<rect x="108" y="380" width="9" height="1" fill="#000"/>
<path d="M108 385.8 L110.2 383.5 H114.8 L117 385.8" stroke="#000" stroke-width="1" fill="none" shape-rendering="geometricPrecision"/>
<rect x="112" y="383" width="1" height="18" fill="#000"/>
<rect x="117" y="367" width="11" height="33" fill="#ee2024" />
<path d="M122.5 367 L126 376.5 M122.5 378 L119.5 380.5 L126 383.5 L119.5 387 L126 390 L119.5 393.5 L126 396.5 L122.5 399.5" stroke="#000" stroke-width="1" fill="none" shape-rendering="geometricPrecision"/>
<rect x="86" y="364" width="5" height="5" fill="#000000" />
<rect x="87" y="365" width="3" height="3" fill="#12a0a0" />
<rect x="88" y="366" width="1" height="1" fill="#003838" />
<rect x="86" y="398" width="5" height="5" fill="#000000" />
<rect x="87" y="399" width="3" height="3" fill="#12a0a0" />
<rect x="88" y="400" width="1" height="1" fill="#003838" />
<rect x="130" y="364" width="5" height="5" fill="#000000" />
<rect x="131" y="365" width="3" height="3" fill="#12a0a0" />
<rect x="132" y="366" width="1" height="1" fill="#003838" />
<rect x="130" y="398" width="5" height="5" fill="#000000" />
<rect x="131" y="399" width="3" height="3" fill="#12a0a0" />
<rect x="132" y="400" width="1" height="1" fill="#003838" />
<rect x="116" y="404" width="1" height="4" fill="#8c8c8c"/>
<rect x="106" y="407" width="21" height="5" fill="#000000" />
<rect x="107" y="408" width="4" height="4" fill="#12a0a0" />
<rect x="108" y="409" width="2" height="2" fill="#002c2c" />
<rect x="112" y="408" width="4" height="4" fill="#12a0a0" />
<rect x="113" y="409" width="2" height="2" fill="#002c2c" />
<rect x="117" y="408" width="4" height="4" fill="#12a0a0" />
<rect x="118" y="409" width="2" height="2" fill="#002c2c" />
<rect x="122" y="408" width="4" height="4" fill="#12a0a0" />
<rect x="123" y="409" width="2" height="2" fill="#002c2c" />
</g>
<g transform="translate(61,0)">
<rect x="86.5" y="313.5" width="48" height="99" fill="url(#gmod)" stroke="#000" stroke-width="1" />
<rect x="90" y="314" width="21" height="5" fill="#000000" />
<rect x="91" y="314" width="4" height="4" fill="#12a0a0" />
<rect x="92" y="315" width="2" height="2" fill="#002c2c" />
<rect x="96" y="314" width="4" height="4" fill="#12a0a0" />
<rect x="97" y="315" width="2" height="2" fill="#002c2c" />
<rect x="101" y="314" width="4" height="4" fill="#12a0a0" />
<rect x="102" y="315" width="2" height="2" fill="#002c2c" />
<rect x="106" y="314" width="4" height="4" fill="#12a0a0" />
<rect x="107" y="315" width="2" height="2" fill="#002c2c" />
<rect x="100" y="319" width="1" height="4" fill="#8c8c8c"/>
<rect x="88.5" y="322.5" width="25" height="34" fill="#f2f2f2" stroke="#8c8c8c" stroke-width="1" />
<rect x="100" y="330" width="1" height="16" fill="#000"/>
<rect x="97" y="334" width="8" height="1" fill="#000"/>
<path d="M100.5 334.5 L96 341 L105 341 Z" fill="#000" shape-rendering="geometricPrecision"/>
<rect x="120" y="326" width="10" height="14" fill="#7a1a20" />
<rect x="120" y="326" width="1" height="14" fill="#200000"/>
<rect x="120" y="339" width="10" height="1" fill="#200000"/>
<path d="M123.6 329.5h3v3.6h-3zM123.6 333.1h3v3.6h-3z" fill="none" stroke="#ee4238" stroke-width="1.25" shape-rendering="geometricPrecision"/>
<rect x="92.5" y="363.5" width="36" height="40" fill="#ececec" stroke="#8c8c8c" stroke-width="1" />
<rect x="93.5" y="364.5" width="34" height="38" fill="none" stroke="#f4f4f4" stroke-width="1" />
<rect x="88" y="366" width="45" height="1" fill="#000"/>
<rect x="88" y="400" width="45" height="1" fill="#000"/>
<rect x="100" y="366" width="1" height="5" fill="#000"/>
<rect x="100" y="378" width="1" height="11" fill="#000"/>
<rect x="100" y="396" width="1" height="5" fill="#000"/>
<g shape-rendering="geometricPrecision"><path d="M98.6 371L100.6 370.4H102.2V378.4H100.6L98.6 377.6Z" fill="#fbfbfb"/><path d="M100.5 370.5H102.7V378.5H100.5" stroke="#000" stroke-width="1" fill="none"/><path d="M98 371V377.6" stroke="#000" stroke-width="1.2" fill="none"/><path d="M98 373L100.5 370.5M98 375.8L100.5 378.5M94.4 378.4L98 377.2" stroke="#000" stroke-width="1" fill="none"/><circle cx="94.6" cy="378.4" r="0.8" fill="#000"/><path d="M101.4 374.2h2.8l-1.4 2.2z" fill="#101030"/></g>
<g shape-rendering="geometricPrecision"><path d="M98.6 389L100.6 388.4H102.2V396.4H100.6L98.6 395.6Z" fill="#fbfbfb"/><path d="M100.5 388.5H102.7V396.5H100.5" stroke="#000" stroke-width="1" fill="none"/><path d="M98 389V395.6" stroke="#000" stroke-width="1.2" fill="none"/><path d="M98 391L100.5 388.5M98 393.8L100.5 396.5M94.4 396.4L98 395.2" stroke="#000" stroke-width="1" fill="none"/><circle cx="94.6" cy="396.4" r="0.8" fill="#000"/><path d="M101.4 392.2h2.8l-1.4 2.2z" fill="#101030"/></g>
<rect x="100" y="383" width="6" height="1" fill="#000"/>
<rect x="104" y="384" width="2" height="1" fill="#000"/>
<rect x="112" y="366" width="1" height="15" fill="#000"/>
<rect x="108" y="380" width="9" height="1" fill="#000"/>
<path d="M108 385.8 L110.2 383.5 H114.8 L117 385.8" stroke="#000" stroke-width="1" fill="none" shape-rendering="geometricPrecision"/>
<rect x="112" y="383" width="1" height="18" fill="#000"/>
<rect x="117" y="367" width="11" height="33" fill="#ee2024" />
<path d="M122.5 367 L126 376.5 M122.5 378 L119.5 380.5 L126 383.5 L119.5 387 L126 390 L119.5 393.5 L126 396.5 L122.5 399.5" stroke="#000" stroke-width="1" fill="none" shape-rendering="geometricPrecision"/>
<rect x="86" y="364" width="5" height="5" fill="#000000" />
<rect x="87" y="365" width="3" height="3" fill="#12a0a0" />
<rect x="88" y="366" width="1" height="1" fill="#003838" />
<rect x="86" y="398" width="5" height="5" fill="#000000" />
<rect x="87" y="399" width="3" height="3" fill="#12a0a0" />
<rect x="88" y="400" width="1" height="1" fill="#003838" />
<rect x="130" y="364" width="5" height="5" fill="#000000" />
<rect x="131" y="365" width="3" height="3" fill="#12a0a0" />
<rect x="132" y="366" width="1" height="1" fill="#003838" />
<rect x="130" y="398" width="5" height="5" fill="#000000" />
<rect x="131" y="399" width="3" height="3" fill="#12a0a0" />
<rect x="132" y="400" width="1" height="1" fill="#003838" />
<rect x="116" y="404" width="1" height="4" fill="#8c8c8c"/>
<rect x="106" y="407" width="21" height="5" fill="#000000" />
<rect x="107" y="408" width="4" height="4" fill="#12a0a0" />
<rect x="108" y="409" width="2" height="2" fill="#002c2c" />
<rect x="112" y="408" width="4" height="4" fill="#12a0a0" />
<rect x="113" y="409" width="2" height="2" fill="#002c2c" />
<rect x="117" y="408" width="4" height="4" fill="#12a0a0" />
<rect x="118" y="409" width="2" height="2" fill="#002c2c" />
<rect x="122" y="408" width="4" height="4" fill="#12a0a0" />
<rect x="123" y="409" width="2" height="2" fill="#002c2c" />
</g>
<g transform="translate(122,0)">
<rect x="86.5" y="313.5" width="48" height="99" fill="url(#gmod)" stroke="#000" stroke-width="1" />
<rect x="90" y="314" width="21" height="5" fill="#000000" />
<rect x="91" y="314" width="4" height="4" fill="#12a0a0" />
<rect x="92" y="315" width="2" height="2" fill="#002c2c" />
<rect x="96" y="314" width="4" height="4" fill="#12a0a0" />
<rect x="97" y="315" width="2" height="2" fill="#002c2c" />
<rect x="101" y="314" width="4" height="4" fill="#12a0a0" />
<rect x="102" y="315" width="2" height="2" fill="#002c2c" />
<rect x="106" y="314" width="4" height="4" fill="#12a0a0" />
<rect x="107" y="315" width="2" height="2" fill="#002c2c" />
<rect x="100" y="319" width="1" height="4" fill="#8c8c8c"/>
<rect x="88.5" y="322.5" width="25" height="34" fill="#f2f2f2" stroke="#8c8c8c" stroke-width="1" />
<rect x="100" y="330" width="1" height="16" fill="#000"/>
<rect x="97" y="334" width="8" height="1" fill="#000"/>
<path d="M100.5 334.5 L96 341 L105 341 Z" fill="#000" shape-rendering="geometricPrecision"/>
<rect x="120" y="326" width="10" height="14" fill="#7a1a20" />
<rect x="120" y="326" width="1" height="14" fill="#200000"/>
<rect x="120" y="339" width="10" height="1" fill="#200000"/>
<path d="M123.6 329.5h3v3.6h-3zM123.6 333.1h3v3.6h-3z" fill="none" stroke="#ee4238" stroke-width="1.25" shape-rendering="geometricPrecision"/>
<rect x="92.5" y="363.5" width="36" height="40" fill="#ececec" stroke="#8c8c8c" stroke-width="1" />
<rect x="93.5" y="364.5" width="34" height="38" fill="none" stroke="#f4f4f4" stroke-width="1" />
<rect x="88" y="366" width="45" height="1" fill="#000"/>
<rect x="88" y="400" width="45" height="1" fill="#000"/>
<rect x="100" y="366" width="1" height="5" fill="#000"/>
<rect x="100" y="378" width="1" height="11" fill="#000"/>
<rect x="100" y="396" width="1" height="5" fill="#000"/>
<g shape-rendering="geometricPrecision"><path d="M98.6 371L100.6 370.4H102.2V378.4H100.6L98.6 377.6Z" fill="#fbfbfb"/><path d="M100.5 370.5H102.7V378.5H100.5" stroke="#000" stroke-width="1" fill="none"/><path d="M98 371V377.6" stroke="#000" stroke-width="1.2" fill="none"/><path d="M98 373L100.5 370.5M98 375.8L100.5 378.5M94.4 378.4L98 377.2" stroke="#000" stroke-width="1" fill="none"/><circle cx="94.6" cy="378.4" r="0.8" fill="#000"/><path d="M101.4 374.2h2.8l-1.4 2.2z" fill="#101030"/></g>
<g shape-rendering="geometricPrecision"><path d="M98.6 389L100.6 388.4H102.2V396.4H100.6L98.6 395.6Z" fill="#fbfbfb"/><path d="M100.5 388.5H102.7V396.5H100.5" stroke="#000" stroke-width="1" fill="none"/><path d="M98 389V395.6" stroke="#000" stroke-width="1.2" fill="none"/><path d="M98 391L100.5 388.5M98 393.8L100.5 396.5M94.4 396.4L98 395.2" stroke="#000" stroke-width="1" fill="none"/><circle cx="94.6" cy="396.4" r="0.8" fill="#000"/><path d="M101.4 392.2h2.8l-1.4 2.2z" fill="#101030"/></g>
<rect x="100" y="383" width="6" height="1" fill="#000"/>
<rect x="104" y="384" width="2" height="1" fill="#000"/>
<rect x="112" y="366" width="1" height="15" fill="#000"/>
<rect x="108" y="380" width="9" height="1" fill="#000"/>
<path d="M108 385.8 L110.2 383.5 H114.8 L117 385.8" stroke="#000" stroke-width="1" fill="none" shape-rendering="geometricPrecision"/>
<rect x="112" y="383" width="1" height="18" fill="#000"/>
<rect x="117" y="367" width="11" height="33" fill="#ee2024" />
<path d="M122.5 367 L126 376.5 M122.5 378 L119.5 380.5 L126 383.5 L119.5 387 L126 390 L119.5 393.5 L126 396.5 L122.5 399.5" stroke="#000" stroke-width="1" fill="none" shape-rendering="geometricPrecision"/>
<rect x="86" y="364" width="5" height="5" fill="#000000" />
<rect x="87" y="365" width="3" height="3" fill="#12a0a0" />
<rect x="88" y="366" width="1" height="1" fill="#003838" />
<rect x="86" y="398" width="5" height="5" fill="#000000" />
<rect x="87" y="399" width="3" height="3" fill="#12a0a0" />
<rect x="88" y="400" width="1" height="1" fill="#003838" />
<rect x="130" y="364" width="5" height="5" fill="#000000" />
<rect x="131" y="365" width="3" height="3" fill="#12a0a0" />
<rect x="132" y="366" width="1" height="1" fill="#003838" />
<rect x="130" y="398" width="5" height="5" fill="#000000" />
<rect x="131" y="399" width="3" height="3" fill="#12a0a0" />
<rect x="132" y="400" width="1" height="1" fill="#003838" />
<rect x="116" y="404" width="1" height="4" fill="#8c8c8c"/>
<rect x="106" y="407" width="21" height="5" fill="#000000" />
<rect x="107" y="408" width="4" height="4" fill="#12a0a0" />
<rect x="108" y="409" width="2" height="2" fill="#002c2c" />
<rect x="112" y="408" width="4" height="4" fill="#12a0a0" />
<rect x="113" y="409" width="2" height="2" fill="#002c2c" />
<rect x="117" y="408" width="4" height="4" fill="#12a0a0" />
<rect x="118" y="409" width="2" height="2" fill="#002c2c" />
<rect x="122" y="408" width="4" height="4" fill="#12a0a0" />
<rect x="123" y="409" width="2" height="2" fill="#002c2c" />
</g>
<rect x="106" y="357" width="1" height="7" fill="#8c8c8c"/>
<rect x="166" y="357" width="1" height="7" fill="#8c8c8c"/>
<rect x="228" y="357" width="1" height="7" fill="#8c8c8c"/>
<rect x="109" y="360" width="118" height="1" fill="#000"/>
<g shape-rendering="geometricPrecision">
</g><g shape-rendering="crispEdges">
<rect x="112" y="358" width="2" height="5" fill="#000" />
<rect x="109" y="359" width="3" height="3" fill="#000" />
<rect x="107" y="360" width="2" height="1" fill="#000" />
<rect x="172" y="358" width="2" height="5" fill="#000" />
<rect x="169" y="359" width="3" height="3" fill="#000" />
<rect x="167" y="360" width="2" height="1" fill="#000" />
<rect x="221" y="358" width="2" height="5" fill="#000" />
<rect x="223" y="359" width="3" height="3" fill="#000" />
<rect x="226" y="360" width="2" height="1" fill="#000" />
</g>
<rect x="105" y="266" width="125" height="2" fill="#0000ff" />
<rect x="105" y="266" width="2" height="47" fill="#0000ff" />
<rect x="169" y="246" width="2" height="67" fill="#0000ff" />
<rect x="228" y="266" width="2" height="47" fill="#0000ff" />
<g shape-rendering="geometricPrecision">
<rect x="104" y="286.6" width="4" height="4.2" fill="#fff"/>
<path d="M101.8 280 L104 280 L106 282.6 L108 280 L110.2 280 L106 287 Z" fill="#0000ff"/>
<path d="M102.4 287.2 L106 292 L109.6 287.2" stroke="#0000ff" stroke-width="1.9" fill="none"/>
<rect x="168" y="286.6" width="4" height="4.2" fill="#fff"/>
<path d="M165.8 280 L168 280 L170 282.6 L172 280 L174.2 280 L170 287 Z" fill="#0000ff"/>
<path d="M166.4 287.2 L170 292 L173.6 287.2" stroke="#0000ff" stroke-width="1.9" fill="none"/>
<rect x="227" y="286.6" width="4" height="4.2" fill="#fff"/>
<path d="M224.8 280 L227 280 L229 282.6 L231 280 L233.2 280 L229 287 Z" fill="#0000ff"/>
<path d="M225.4 287.2 L229 292 L232.6 287.2" stroke="#0000ff" stroke-width="1.9" fill="none"/>
<path d="M166.4 241.2 L170 246.6 L173.6 241.2" stroke="#0000ff" stroke-width="1.9" fill="none"/>
</g>
<g transform="translate(0,0)">
<g shape-rendering="geometricPrecision">
<path d="M87.5 571 L89.5 569.5 L94.5 569.5 L94.5 586.5 L89.5 586.5 L87.5 585 Z" fill="#4b4b4b" stroke="#000" stroke-width="1"/>
<path d="M94.5 569 L97.5 565.5 L133.5 565.5 L133.5 590.5 L97.5 590.5 L94.5 587 Z" fill="#4b4b4b" stroke="#000" stroke-width="1"/>
<path d="M104.5 565.5 L105.5 561.5 L107.5 559.5 L113.5 559.5 L113.5 565.5 Z" fill="#4b4b4b" stroke="#000" stroke-width="1"/>
</g>
<rect x="113.5" y="560.5" width="4" height="3" fill="#4b4b4b" stroke="#000" stroke-width="1" />
<rect x="115" y="561" width="1" height="2" fill="#000"/>
<rect x="88" y="574" width="7" height="1" fill="#000"/>
<rect x="88" y="581" width="7" height="1" fill="#000"/>
<rect x="89" y="570" width="1" height="17" fill="#000"/>
<rect x="97" y="566" width="1" height="25" fill="#000"/>
<rect x="102" y="566" width="1" height="25" fill="#000"/>
<rect x="127" y="566" width="1" height="25" fill="#000"/>
<rect x="102" y="568" width="26" height="1" fill="#000"/>
<rect x="102" y="571" width="26" height="1" fill="#000"/>
<rect x="102" y="576" width="26" height="1" fill="#000"/>
<rect x="102" y="579" width="26" height="1" fill="#000"/>
<rect x="102" y="584" width="26" height="1" fill="#000"/>
<rect x="102" y="587" width="26" height="1" fill="#000"/>
<rect x="133.5" y="568.5" width="2" height="19" fill="#4b4b4b" stroke="#000" stroke-width="1" />
<rect x="135.5" y="574.5" width="8" height="7" fill="#c8c8c8" stroke="#000" stroke-width="1" />
</g>
<g transform="translate(61,0)">
<g shape-rendering="geometricPrecision">
<path d="M87.5 571 L89.5 569.5 L94.5 569.5 L94.5 586.5 L89.5 586.5 L87.5 585 Z" fill="#4b4b4b" stroke="#000" stroke-width="1"/>
<path d="M94.5 569 L97.5 565.5 L133.5 565.5 L133.5 590.5 L97.5 590.5 L94.5 587 Z" fill="#4b4b4b" stroke="#000" stroke-width="1"/>
<path d="M104.5 565.5 L105.5 561.5 L107.5 559.5 L113.5 559.5 L113.5 565.5 Z" fill="#4b4b4b" stroke="#000" stroke-width="1"/>
</g>
<rect x="113.5" y="560.5" width="4" height="3" fill="#4b4b4b" stroke="#000" stroke-width="1" />
<rect x="115" y="561" width="1" height="2" fill="#000"/>
<rect x="88" y="574" width="7" height="1" fill="#000"/>
<rect x="88" y="581" width="7" height="1" fill="#000"/>
<rect x="89" y="570" width="1" height="17" fill="#000"/>
<rect x="97" y="566" width="1" height="25" fill="#000"/>
<rect x="102" y="566" width="1" height="25" fill="#000"/>
<rect x="127" y="566" width="1" height="25" fill="#000"/>
<rect x="102" y="568" width="26" height="1" fill="#000"/>
<rect x="102" y="571" width="26" height="1" fill="#000"/>
<rect x="102" y="576" width="26" height="1" fill="#000"/>
<rect x="102" y="579" width="26" height="1" fill="#000"/>
<rect x="102" y="584" width="26" height="1" fill="#000"/>
<rect x="102" y="587" width="26" height="1" fill="#000"/>
<rect x="133.5" y="568.5" width="2" height="19" fill="#4b4b4b" stroke="#000" stroke-width="1" />
<rect x="135.5" y="574.5" width="8" height="7" fill="#c8c8c8" stroke="#000" stroke-width="1" />
</g>
<g transform="translate(122,0)">
<g shape-rendering="geometricPrecision">
<path d="M87.5 571 L89.5 569.5 L94.5 569.5 L94.5 586.5 L89.5 586.5 L87.5 585 Z" fill="#4b4b4b" stroke="#000" stroke-width="1"/>
<path d="M94.5 569 L97.5 565.5 L133.5 565.5 L133.5 590.5 L97.5 590.5 L94.5 587 Z" fill="#4b4b4b" stroke="#000" stroke-width="1"/>
<path d="M104.5 565.5 L105.5 561.5 L107.5 559.5 L113.5 559.5 L113.5 565.5 Z" fill="#4b4b4b" stroke="#000" stroke-width="1"/>
</g>
<rect x="113.5" y="560.5" width="4" height="3" fill="#4b4b4b" stroke="#000" stroke-width="1" />
<rect x="115" y="561" width="1" height="2" fill="#000"/>
<rect x="88" y="574" width="7" height="1" fill="#000"/>
<rect x="88" y="581" width="7" height="1" fill="#000"/>
<rect x="89" y="570" width="1" height="17" fill="#000"/>
<rect x="97" y="566" width="1" height="25" fill="#000"/>
<rect x="102" y="566" width="1" height="25" fill="#000"/>
<rect x="127" y="566" width="1" height="25" fill="#000"/>
<rect x="102" y="568" width="26" height="1" fill="#000"/>
<rect x="102" y="571" width="26" height="1" fill="#000"/>
<rect x="102" y="576" width="26" height="1" fill="#000"/>
<rect x="102" y="579" width="26" height="1" fill="#000"/>
<rect x="102" y="584" width="26" height="1" fill="#000"/>
<rect x="102" y="587" width="26" height="1" fill="#000"/>
<rect x="133.5" y="568.5" width="2" height="19" fill="#4b4b4b" stroke="#000" stroke-width="1" />
<rect x="135.5" y="574.5" width="8" height="7" fill="#c8c8c8" stroke="#000" stroke-width="1" />
</g>
<g shape-rendering="geometricPrecision">
<text x="200.5" y="122" font-size="13" text-anchor="start" fill="#000" textLength="124.5" lengthAdjust="spacingAndGlyphs">System supply power</text>
<text x="200.5" y="138" font-size="13" text-anchor="start" fill="#000" textLength="73.5" lengthAdjust="spacingAndGlyphs">&gt; 0 is supply</text>
<text x="200.5" y="154" font-size="13" text-anchor="start" fill="#000" textLength="105" lengthAdjust="spacingAndGlyphs">&lt; 0 is regenerative</text>
<text x="268" y="229" font-size="13" text-anchor="start" fill="#000" textLength="103" lengthAdjust="spacingAndGlyphs">Bus supply power</text>
<text x="268" y="245" font-size="13" text-anchor="start" fill="#000" textLength="73.5" lengthAdjust="spacingAndGlyphs">&gt; 0 is supply</text>
<text x="268" y="261" font-size="13" text-anchor="start" fill="#000" textLength="105" lengthAdjust="spacingAndGlyphs">&lt; 0 is regenerative</text>
<text x="332.6" y="319" font-size="13" text-anchor="start" fill="#000" textLength="43.6" lengthAdjust="spacingAndGlyphs">Bleeder</text>
<text x="332.6" y="331" font-size="13" text-anchor="start" fill="#000" textLength="33" lengthAdjust="spacingAndGlyphs">power</text>
<text x="341.5" y="403" font-size="13" text-anchor="start" fill="#000" textLength="61" lengthAdjust="spacingAndGlyphs">Bus stored</text>
<text x="341.5" y="416.4" font-size="13" text-anchor="start" fill="#000" textLength="37.8" lengthAdjust="spacingAndGlyphs">energy</text>
<text x="345.6" y="467" font-size="13" text-anchor="start" fill="#000" textLength="43.5" lengthAdjust="spacingAndGlyphs">Bleeder</text>
<text x="345.6" y="482.7" font-size="13" text-anchor="start" fill="#000" textLength="37.6" lengthAdjust="spacingAndGlyphs">energy</text>
<text x="311.3" y="546" font-size="13" text-anchor="start" fill="#000" textLength="79.2" lengthAdjust="spacingAndGlyphs">Inverter power</text>
<text x="311.3" y="562" font-size="13" text-anchor="start" fill="#000" textLength="72.8" lengthAdjust="spacingAndGlyphs">for each axis</text>
<text x="311.3" y="578" font-size="13" text-anchor="start" fill="#000" textLength="86.2" lengthAdjust="spacingAndGlyphs">&gt; 0 is motoring</text>
<text x="311.3" y="594" font-size="13" text-anchor="start" fill="#000" textLength="96.4" lengthAdjust="spacingAndGlyphs">&lt; 0 is generating</text>
</g>
<rect x="169" y="118" width="27" height="1" fill="#000"/>
<rect x="169" y="118" width="1" height="117" fill="#000"/>
<rect x="328" y="118" width="245" height="1" fill="#000"/>
<rect x="205" y="225" width="61" height="1" fill="#000"/>
<rect x="205" y="225" width="1" height="88" fill="#000"/>
<rect x="374" y="225" width="200" height="1" fill="#000"/>
<rect x="321" y="314" width="8" height="1" fill="#000"/>
<rect x="321" y="314" width="1" height="149" fill="#000"/>
<rect x="377" y="321" width="266" height="1" fill="#000"/>
<rect x="261" y="367" width="22" height="1" fill="#000"/>
<rect x="282" y="367" width="1" height="32" fill="#000"/>
<rect x="282" y="398" width="37" height="1" fill="#000"/>
<rect x="324" y="398" width="15" height="1" fill="#000"/>
<rect x="150" y="462" width="193" height="1" fill="#000"/>
<rect x="395" y="463" width="21" height="1" fill="#000"/>
<rect x="262" y="541" width="45" height="1" fill="#000"/>
<rect x="398" y="543" width="129" height="1" fill="#000"/>
<g shape-rendering="crispEdges" stroke="#000" stroke-width="1" fill="none">
<path d="M318.5 398.5 Q321.5 394.5 324.5 398.5"/>
<path d="M123 399.5L150 462.5M179 399.5L207 462.5M246 399.5L274.5 462.5"/>
<path d="M404.5 408.5L549 451.3"/>
<path d="M415 463.5L573 478.3L638 515.5"/>
<path d="M534 226L577 274"/>
<path d="M600.5 321.7L640 338.8"/>
<path d="M526 543.5L533 547"/>
</g>
<g shape-rendering="geometricPrecision" fill="#000">
</g><g shape-rendering="crispEdges">
<rect x="167" y="229" width="5" height="2" fill="#000" />
<rect x="168" y="231" width="3" height="3" fill="#000" />
<rect x="169" y="234" width="1" height="2" fill="#000" />
<rect x="566" y="116" width="2" height="5" fill="#000" />
<rect x="568" y="117" width="3" height="3" fill="#000" />
<rect x="571" y="118" width="2" height="1" fill="#000" />
<rect x="567" y="223" width="2" height="5" fill="#000" />
<rect x="569" y="224" width="3" height="3" fill="#000" />
<rect x="572" y="225" width="2" height="1" fill="#000" />
<rect x="636" y="319" width="3" height="5" fill="#000" />
<rect x="639" y="320" width="3" height="3" fill="#000" />
<rect x="642" y="321" width="2" height="1" fill="#000" />
<rect x="263" y="365" width="3" height="5" fill="#000" />
<rect x="260" y="366" width="3" height="3" fill="#000" />
<rect x="260" y="367" width="0" height="1" fill="#000" />
<rect x="266" y="539" width="3" height="5" fill="#000" />
<rect x="263" y="540" width="3" height="3" fill="#000" />
<rect x="261" y="541" width="2" height="1" fill="#000" />
</g><g shape-rendering="geometricPrecision" fill="#000">
<path d="M577.3 274.6L573.5 274.9L569.8 272.3L572.5 268.3L576.2 270.9Z"/>
<path d="M640.5 335L645.2 341L638 341Z"/>
<path d="M548.5 446.5L555.2 453.8L548.5 454.6Z"/>
<path d="M638.6 512.6L643.2 519L635.8 519Z"/>
<path d="M533.3 543.8L538.3 549.9L531 549.9Z"/>
<path d="M122.7 399.0L126.0 400.4L127.4 403.5L122.8 405.5L121.4 402.4Z"/>
<path d="M178.7 399.0L182.0 400.4L183.4 403.5L178.8 405.5L177.4 402.4Z"/>
<path d="M245.7 399.0L249.0 400.4L250.4 403.5L245.8 405.5L244.4 402.4Z"/>
</g>
</svg>
</body></html>
